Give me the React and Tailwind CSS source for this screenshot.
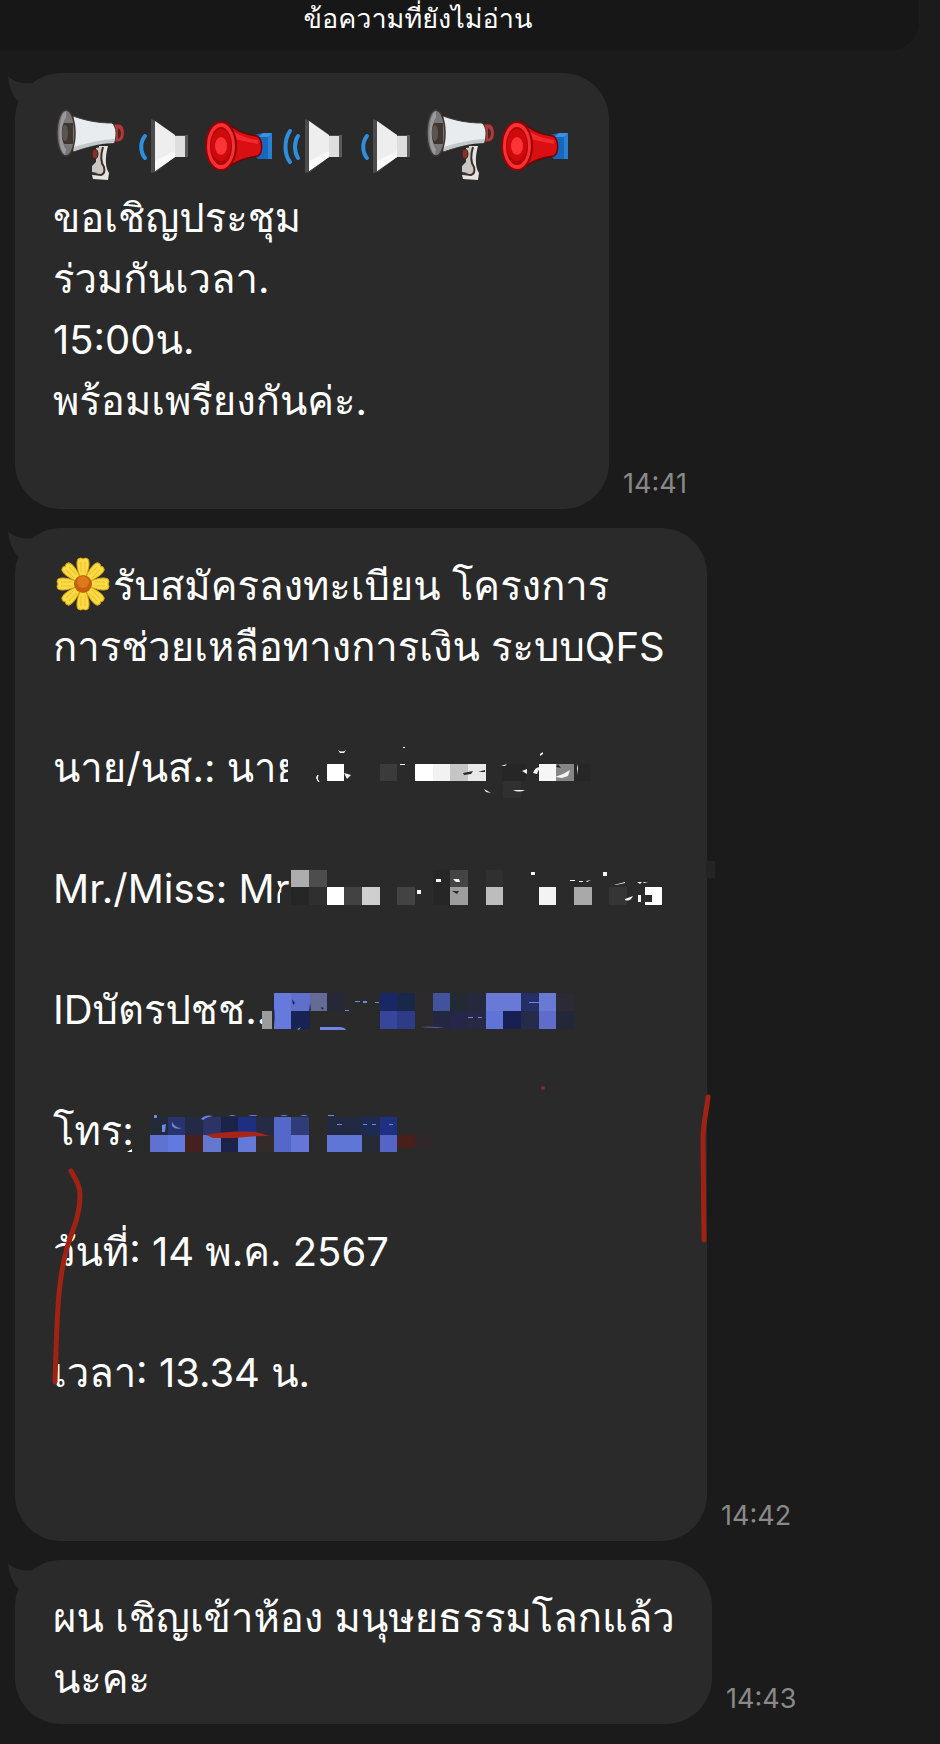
const MegaphoneIcon = () => (
  <svg viewBox="0 0 74 74" className="w-[74px] h-[74px] shrink-0" aria-label="megaphone" role="img">
    <path d="M46 37 H55 C52 48 52 58 56 64 L55 71 L40 70 L39 66 L48 63 Z" fill="#e6e4e0" />
    <path d="M43 39 L50 38 C48 47 49 54 52 58 L50 65 L39 63 L39 57 L43 53 Z" fill="#c9c7c4" />
    <path d="M50 38 C47 48 48 54 51 58 C52 62 51 65 48 66 L40 65" fill="none" stroke="#3b2f2b" strokeWidth="2" />
    <ellipse cx="42" cy="45" rx="3" ry="5" fill="#8a2f28" stroke="#3b2020" strokeWidth="1" />
    <path d="M61 15 H66 C70 16 72 20 71 27 C70 32 67 33 62 33 Z" fill="#b03a3a" stroke="#4a2321" strokeWidth="1" />
    <path d="M65 19 C69 21 69 28 65 30 Z" fill="#4a2321" />
    <path d="M20 7 C34 12 46 14 59 14 C64 18 64 28 61 34 C47 34 34 38 20 43 Z" fill="#e9ecee" stroke="#453c36" strokeWidth="1" />
    <path d="M21 38 C34 34 46 31 62 30 L61 34 C47 34 34 38 21 42 Z" fill="#c3c8cb" />
    <ellipse cx="13" cy="24" rx="9" ry="23" fill="#77777a" stroke="#3e3531" strokeWidth="1.5" />
    <path d="M13 2 C5 5 4 40 12 46 L13 40 C8 36 8 12 13 9 Z" fill="#9b9b9e" />
    <path d="M11 14 H20 V35 H11 C8 30 8 18 11 14 Z" fill="#40352f" />
    <ellipse cx="12" cy="24" rx="3" ry="8" fill="#5a5552" />
  </svg>
);

const SpeakerBody = () => (
  <g>
    <path d="M24 10 L29 12 L48 26 H60 V48 H48 L29 63 L24 64 Z" fill="#4b4b4b" />
    <path d="M28 12 L48 26 V48 L28 62 Z" fill="#eeeeee" />
    <path d="M28 52 L48 42 V48 L28 62 Z" fill="#f9f9f9" />
    <path d="M48 27 H58 V48 H48 Z" fill="#dedede" />
    <path d="M58 26 H61 V48 H58 Z" fill="#5a5a5a" />
  </g>
);

const SpeakerIcon = () => (
  <svg viewBox="0 0 74 74" className="w-[74px] h-[74px] shrink-0" aria-label="speaker" role="img">
    <SpeakerBody />
    <path d="M18 27 C13 33 13 43 18 49" fill="none" stroke="#2f8fdc" strokeWidth="4" strokeLinecap="round" />
  </svg>
);

const LoudSpeakerIcon = () => (
  <svg viewBox="0 0 74 74" className="w-[74px] h-[74px] shrink-0" aria-label="loud speaker" role="img">
    <g transform="translate(6 0)">
      <SpeakerBody />
    </g>
    <path d="M15 22 C9 31 9 45 15 53 M23 27 C19 33 19 43 23 49" fill="none" stroke="#2f8fdc" strokeWidth="4" strokeLinecap="round" />
  </svg>
);

const HornIcon = () => (
  <svg viewBox="0 0 74 74" className="w-[74px] h-[74px] shrink-0" aria-label="horn" role="img">
    <path d="M53 26 L62 24 H71 V50 H57 L53 46 Z" fill="#1768bd" />
    <path d="M62 24 H71 L67 28 H57 Z" fill="#3b92e0" />
    <path d="M67 28 L71 24 V50 H67 Z" fill="#2a7fd2" />
    <path d="M24 12 C34 22 46 26 56 27 C62 30 62 44 57 47 C45 48 34 52 24 61 Z" fill="#d90f12" stroke="#6d0507" strokeWidth="1.5" />
    <path d="M30 20 C38 27 48 30 57 31 L57 35 C48 33 38 31 32 30 Z" fill="#f4292c" />
    <ellipse cx="20" cy="37" rx="15" ry="24" fill="#f93034" stroke="#8d0508" strokeWidth="2" />
    <ellipse cx="20" cy="37" rx="11" ry="19" fill="#b30306" />
    <ellipse cx="20" cy="36" rx="10" ry="16" fill="#cf0a0d" />
    <ellipse cx="20" cy="37" rx="6" ry="9" fill="#fb3438" />
  </svg>
);

const FlowerIcon = () => (
  <svg viewBox="0 2 60 61" className="w-[60px] h-[61px] shrink-0" aria-label="flower" role="img">
    {[45, 135, 225, 315, 0, 90, 180, 270].map((angle) => (
      <g key={angle} transform={`rotate(${angle} 30 31)`}>
        <path d="M27 24 C24 15 23 10 25 6 Q28 4 30 6 Q32 4 35 6 C37 10 36 15 33 24 Z" fill="#fbdc45" stroke="#d9a514" strokeWidth="1" />
        <path d="M28 9 V20 M32 9 V20" stroke="#ecc02c" strokeWidth="1" />
      </g>
    ))}
    <circle cx="30" cy="31" r="9" fill="#c4610e" />
    <circle cx="30" cy="29" r="6" fill="#dc7a19" />
  </svg>
);

// [x, y, width, height, colour]
const nameBlocks = [
  [288, 745, 26, 45, '#2a2a2a'],
  [327, 764, 17, 17, '#ffffff'],
  [380, 764, 17, 17, '#3b3b3b'],
  [415, 764, 18, 17, '#ffffff'],
  [433, 764, 17, 17, '#f2f2f2'],
  [450, 764, 18, 17, '#c5c5c5'],
  [468, 764, 18, 17, '#e9e9e9'],
  [502, 764, 24, 17, '#262626'],
  [503, 781, 18, 17, '#303030'],
  [539, 764, 17, 17, '#f6f6f6'],
  [556, 764, 18, 17, '#868686'],
  [574, 764, 17, 17, '#272727'],
];

const latinNameBlocks = [
  [291, 870, 18, 17, '#adadad'],
  [309, 870, 18, 17, '#4d4d4d'],
  [291, 887, 18, 18, '#262626'],
  [309, 887, 18, 18, '#2f2f2f'],
  [327, 887, 17, 18, '#ffffff'],
  [344, 887, 18, 18, '#424242'],
  [362, 887, 18, 18, '#cfcfcf'],
  [397, 887, 18, 18, '#434343'],
  [433, 870, 17, 35, '#262626'],
  [450, 870, 18, 17, '#444444'],
  [450, 887, 18, 18, '#9d9d9d'],
  [486, 870, 17, 17, '#303030'],
  [486, 887, 17, 18, '#bdbdbd'],
  [539, 887, 17, 18, '#f3f3f3'],
  [574, 887, 18, 18, '#a9a9a9'],
  [609, 887, 18, 18, '#353535'],
  [645, 887, 17, 18, '#ffffff'],
  [641, 895, 11, 7, '#2a2a2a'],
  [706, 861, 9, 17, '#242424'],
];

const idBlocks = [
  [262, 1011, 10, 18, '#9c9c9c'],
  [274, 993, 17, 36, '#6679dc'],
  [291, 993, 19, 18, '#5f70cc'],
  [310, 993, 17, 18, '#646c95'],
  [327, 993, 17, 18, '#262737'],
  [291, 1011, 19, 18, '#192254'],
  [380, 993, 17, 18, '#1a2767'],
  [397, 993, 18, 18, '#192748'],
  [380, 1011, 17, 18, '#37469a'],
  [397, 1011, 18, 18, '#2e3b86'],
  [415, 993, 18, 36, '#2c2a2d'],
  [433, 993, 17, 18, '#41549b'],
  [433, 1011, 17, 18, '#242741'],
  [450, 993, 18, 18, '#222b31'],
  [450, 1011, 18, 18, '#26264a'],
  [468, 993, 18, 18, '#242a3c'],
  [468, 1011, 18, 18, '#282844'],
  [486, 993, 35, 18, '#687ad6'],
  [486, 1011, 17, 18, '#6073d6'],
  [503, 1011, 18, 18, '#182052'],
  [521, 993, 18, 18, '#262f65'],
  [521, 1011, 18, 18, '#242b4b'],
  [539, 993, 17, 18, '#687ad3'],
  [539, 1011, 17, 18, '#5f6ccb'],
  [556, 993, 18, 18, '#2b2a35'],
  [556, 1011, 18, 18, '#232838'],
];

const phoneBlocks = [
  [150, 1117, 18, 18, '#232a38'],
  [168, 1117, 17, 18, '#28346e'],
  [150, 1135, 18, 17, '#6072d1'],
  [168, 1135, 17, 17, '#617add'],
  [185, 1117, 18, 18, '#222a45'],
  [185, 1135, 18, 17, '#45201c'],
  [203, 1117, 18, 18, '#2d3267'],
  [203, 1135, 18, 17, '#6578d0'],
  [221, 1117, 17, 35, '#1b2448'],
  [238, 1117, 18, 18, '#1e2f83'],
  [238, 1135, 18, 17, '#6479d8'],
  [256, 1117, 18, 18, '#252b42'],
  [256, 1135, 18, 17, '#332a2a'],
  [274, 1117, 17, 35, '#5468c8'],
  [291, 1117, 18, 18, '#303c77'],
  [291, 1135, 18, 17, '#6676d8'],
  [327, 1117, 35, 18, '#222943'],
  [327, 1135, 35, 17, '#6076d6'],
  [362, 1117, 18, 18, '#1d2a54'],
  [362, 1135, 18, 17, '#262936'],
  [380, 1117, 17, 18, '#1f3082'],
  [380, 1135, 17, 17, '#5465c6'],
  [397, 1135, 18, 13, '#471f1b'],
  [415, 1135, 17, 13, '#2f2729'],
];

const blocks = [...nameBlocks, ...latinNameBlocks, ...idBlocks, ...phoneBlocks];

// Pixelated details and red pen strokes drawn over the registration message
const MarkupLayer = () => (
  <svg viewBox="15 528 720 1013" className="absolute left-0 top-0 w-[720px] h-[1013px] pointer-events-none" aria-hidden="true">
    <g shapeRendering="crispEdges">
      {blocks.map(([x, y, w, h, fill]) => (
        <rect key={`${x}-${y}-${w}`} x={x} y={y} width={w} height={h} fill={fill} />
      ))}
    </g>

    {/* leftovers of the hidden names */}
    <g fill="#f4f4f4">
      <path d="M338 750 Q342 753 346 750 L344 753 H340 Z" />
      <path d="M318 775 Q316 779 319 782 L318 781 Q315 777 318 775 Z" stroke="#f4f4f4" />
      <path d="M344 773 L351 775 L347 779 Z" />
      <path d="M484 789 L491 793 L486 792 Z M513 790 H525 Q519 793 513 790 Z" />
      <path d="M501 766 L507 764 L505 766 Z M522 771 L527 769 V774 Z" />
      <path d="M533 773 Q535 767 540 767 L537 774 Z M540 754 L543 752 V754 L540 756 Z" />
      <path d="M555 777 L563 774 L570 770 L568 776 L562 778 Z M577 764 L578 768 L577 775 Z" />
      <path d="M400 764 H405 V765 H400 Z M403 747 H405 V748 H403 Z" />
      <path d="M436 879 H441 V882 H436 Z M453 879 L459 879 L460 882 L456 882 Z" />
      <path d="M417 890 H421 V894 H417 Z M531 872 H535 V875 H531 Z M603 872 H607 V876 H603 Z" />
      <path d="M570 880 H575 V881 H570 Z M579 881 H583 V882 H579 Z M586 881 L591 880 L587 882 Z" />
      <path d="M614 885 L625 882 V883 L616 885 Z M637 882 H642 L640 884 Z M643 882 L648 882 L644 883 Z" />
      <path d="M625 899 L633 896 Q630 902 625 900 Z M638 895 H641 V902 H638 Z" />
    </g>
    <path d="M463 773 L473 771 L471 774 L464 775 Z M478 772 L485 770 V772 Z M452 891 H459 L457 894 Z M558 764 L561 768 L556 767 Z" fill="#2a2a2a" />
    <path d="M272 874 L276 880 L280 888 L276 897 L275 887 Z M280 893 L291 888 V906 H280 Z" fill="#2a2a2a" />

    {/* leftovers of the hidden numbers */}
    <g fill="#6e86e6">
      <path d="M320 1027 H340 Q346 1028 346 1030 H320 Z M420 1027 Q432 1026 445 1028 Z M297 1029 L301 1027 L299 1030 Z" />
      <path d="M355 1001 H360 V1002 H355 Z M363 1001 H367 V1003 H363 Z M375 1002 H379 V1003 H375 Z M345 1010 H349 V1011 H345 Z" />
      <path d="M468 1017 H473 V1018 H468 Z M478 1017 H482 V1018 H478 Z M529 1002 H541 V1003 H529 Z" />
      <path d="M154 1115 H157 V1118 H154 Z M162 1125 L166 1124 L165 1132 H162 Z M172 1122 Q175 1128 182 1128 Q175 1130 172 1126 Z" />
      <path d="M201 1119 Q205 1114 213 1116 Q206 1117 203 1120 Z M229 1116 Q232 1114 236 1116 Z M248 1116 Q253 1114 258 1116 Z" />
      <path d="M280 1116 Q284 1114 288 1116 Z M300 1116 Q304 1114 308 1116 Z M328 1115 H334 V1116 H328 Z" />
      <path d="M337 1124 H342 V1125 H337 Z M363 1124 H367 V1125 H363 Z M372 1124 H376 V1125 H372 Z M389 1124 H393 V1125 H389 Z" />
    </g>
    <path d="M292 999 L295 1003 L293 1005 Z M310 1003 L311 1010 L309 1012 Z M321 1007 L324 1008 L322 1010 Z M272 1000 Q276 1010 274 1026" fill="#202552" />
    <path d="M127 1152 L132 1149 V1152 Z" fill="#ffffff" />
    <path d="M206 1135 Q230 1130 256 1132 L270 1136 Q250 1136 235 1138 L213 1138 Z" fill="#a82318" />

    <circle cx="543" cy="1088" r="2" fill="#8f2620" />
    <g fill="none" stroke="#9f2213" strokeWidth="5" strokeLinecap="round" strokeLinejoin="round">
      <path d="M71 1171 C76 1180 80 1186 80 1195 C80 1217 72 1230 67 1248 C57 1282 57 1325 55 1382" />
      <path d="M708 1097 C706 1115 703 1124 703 1140 L704 1240" />
    </g>
  </svg>
);

const BubbleTail = () => (
  <svg viewBox="0 0 30 30" className="absolute -left-2 top-0 w-[30px] h-[30px]" aria-hidden="true">
    <path d="M1 3 C7 9 15 11 24 10 L30 20 L11 28 C6 23 2 15 1 3 Z" fill="#2a2a2a" />
  </svg>
);

const Message = ({ time, width, children }) => (
  <article className="flex items-end gap-3.5">
    <div className={`relative ${width} rounded-[46px] bg-[#2a2a2a] pl-[38px] pt-[27px] pb-[15px] text-[40px] leading-[61px] text-white whitespace-nowrap`}>
      <BubbleTail />
      {children}
    </div>
    <time className="mb-[7px] text-[27px] leading-9 text-[#898989]">{time}</time>
  </article>
);

const App = () => {
  return (
    <div className="min-h-screen overflow-hidden bg-[#1b1b1b] pb-5 font-['Inter','Loma','FreeSans',sans-serif]">
      <header className="-ml-[83px] mr-[21px] flex h-[50px] items-start justify-center rounded-b-[28px] bg-[#171717] pt-px">
        <h1 className="text-[27px] leading-9 text-white">ข้อความที่ยังไม่อ่าน</h1>
      </header>

      <main className="mt-[23px] flex flex-col gap-[19px] pl-[15px]">
        <Message time="14:41" width="w-[594px]">
          <div className="flex h-[87px] items-end pb-1">
            <MegaphoneIcon />
            <SpeakerIcon />
            <HornIcon />
            <LoudSpeakerIcon />
            <SpeakerIcon />
            <MegaphoneIcon />
            <HornIcon />
          </div>
          <p>ขอเชิญประชุม</p>
          <p>ร่วมกันเวลา.</p>
          <p>15:00น.</p>
          <p className="mb-[63px]">พร้อมเพรียงกันค่ะ.</p>
        </Message>

        <Message time="14:42" width="w-[692px]">
          <div className="flex flex-col gap-[60px] pb-[123px]">
            <div>
              <p className="flex">
                <FlowerIcon />
                รับสมัครลงทะเบียน โครงการ
              </p>
              <p>การช่วยเหลือทางการเงิน ระบบQFS</p>
            </div>
            <p>นาย/นส.: นาย</p>
            <p>Mr./Miss: Mr</p>
            <p>IDบัตรปชช..</p>
            <p>โทร:</p>
            <p>วันที่: 14 พ.ค. 2567</p>
            <p>เวลา: 13.34 น.</p>
          </div>
          <MarkupLayer />
        </Message>

        <Message time="14:43" width="w-[697px]">
          <p>ผน เชิญเข้าห้อง มนุษยธรรมโลกแล้ว</p>
          <p>นะคะ</p>
        </Message>
      </main>
    </div>
  );
};

export default App;
